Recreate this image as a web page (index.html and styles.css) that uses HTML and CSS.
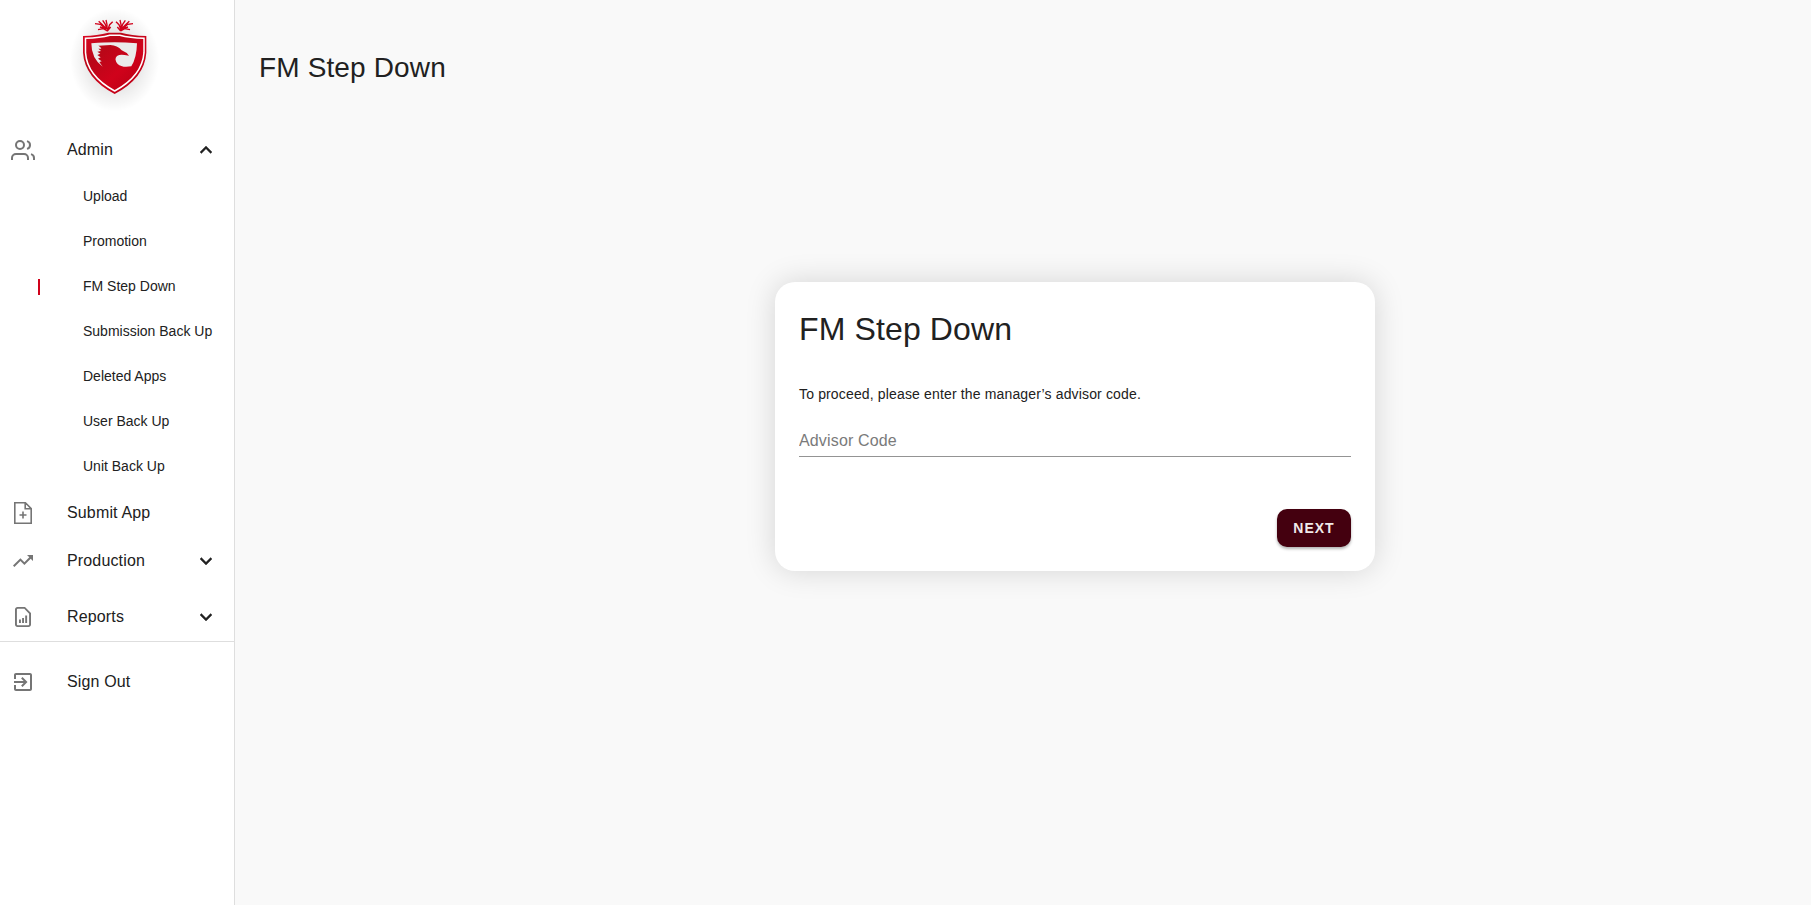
FILE: index.html
```html
<!DOCTYPE html>
<html lang="en">
<head>
<meta charset="utf-8">
<title>FM Step Down</title>
<link rel="stylesheet" href="styles.css">
</head>
<body>
<div class="app">
  <aside class="sidebar">
    <div class="brand">
      <svg class="logo" width="90" height="110" viewBox="0 0 270 330">
        <defs>
          <radialGradient id="halo"><stop offset=".4" stop-color="#000" stop-opacity=".13"/><stop offset=".75" stop-color="#000" stop-opacity=".05"/><stop offset="1" stop-color="#000" stop-opacity="0"/></radialGradient>
          <linearGradient id="red" x1="0" y1="0" x2="1" y2="1"><stop offset="0" stop-color="#df0824"/><stop offset=".3" stop-color="#b90718"/><stop offset=".6" stop-color="#d0021b"/><stop offset="1" stop-color="#b00012"/></linearGradient>
        </defs>
        <ellipse cx="134" cy="165" rx="134" ry="155" fill="url(#halo)"/>
        <g fill="none" stroke="#d0021b" stroke-width="4">
          <path d="M75 56l16 2 16 14M86 49l12 11 12 12M98 46l8 12 5 15M108 45l3 14v14M128 50l-9 9-7 18M84 74l16-3 12 7M90 66l20 7M122 66l-10 12"/>
          <path d="M189 56l-16 2-16 14M178 49l-12 11-12 12M166 46l-8 12-5 15M150 45l3 14v14M138 50l9 9 7 18M180 74l-16-3-12 7M174 66l-20 7M142 66l10 12"/>
        </g>
        <path d="M39 93q44-1 76-10h38q31 9 76 10v50q-5 76-95 124-90-48-95-124z" fill="url(#red)"/>
        <path d="M46.500 100q44-1 73-9h30q29 8 72.500 9v43q-5 70-88 115-83-45-87.500-115z" fill="none" stroke="#fff" stroke-width="4.500"/>
        <path d="M64 115q40-3 70-3 32 0 67 3-1 44-17 69-28 5-41-7-12-15-2-24 9-6 23-3l13 2q-7-10-22-16-13-15-34-16l-36 2q8 5 9 9h-9l8 7-11 2 9 6-9 4 10 7-8 4 11 8-7 2 10 14q-34-24-34-70z" fill="#ebebeb"/>
      </svg>
    </div>
    <nav class="nav">
      <a class="item item-first">
        <svg class="icon line" viewBox="0 0 24 24"><path d="M17 22v-2a4 4 0 0 0-4-4H5a4 4 0 0 0-4 4v2M23 22v-2a4 4 0 0 0-3-3.87M16 3.13a4 4 0 0 1 0 7.75"/><circle cx="9" cy="7" r="4"/></svg>
        <span class="label">Admin</span>
        <svg class="chevron" viewBox="0 0 24 24"><path d="M12 8l-6 6 1.41 1.41L12 10.83l4.59 4.58L18 14z"/></svg>
      </a>
      <div class="sub">
        <a class="subitem">Upload</a>
        <a class="subitem">Promotion</a>
        <a class="subitem active">FM Step Down</a>
        <a class="subitem">Submission Back Up</a>
        <a class="subitem">Deleted Apps</a>
        <a class="subitem">User Back Up</a>
        <a class="subitem">Unit Back Up</a>
      </div>
      <a class="item">
        <svg class="icon thin" viewBox="0 0 24 24"><path d="M3.800 1.800h10.600l5.800 5.800v14.600H3.800zM14.200 2v5.800h5.800M12 10.500v7M8.500 14h7"/></svg>
        <span class="label">Submit App</span>
      </a>
      <a class="item">
        <svg class="icon" viewBox="0 0 24 24"><path d="M16 6l2.290 2.290-4.880 4.880-4-4L2 16.590 3.410 18l6-6 4 4 6.300-6.290L22 12V6z"/></svg>
        <span class="label">Production</span>
        <svg class="chevron" viewBox="0 0 24 24"><path d="M16.590 8.590L12 13.170 7.410 8.590 6 10l6 6 6-6z"/></svg>
      </a>
      <a class="item item-reports">
        <svg class="icon" viewBox="0 0 24 24"><path d="M14 2H6.500C5.100 2 4 3.100 4 4.500v15C4 20.900 5.100 22 6.500 22h11c1.400 0 2.500-1.100 2.500-2.500V8zM18.100 19.400c0 .5-.3.800-.8.800H6.700c-.5 0-.8-.3-.8-.8V4.600c0-.5.3-.8.800-.8h6.600l4.800 4.900zM8 14.500h1.900V18H8zM11.100 13H13v5h-1.900zM14.200 10.500h1.900V18h-1.900z" fill-rule="evenodd"/></svg>
        <span class="label">Reports</span>
        <svg class="chevron" viewBox="0 0 24 24"><path d="M16.590 8.590L12 13.170 7.410 8.590 6 10l6 6 6-6z"/></svg>
      </a>
    </nav>
    <div class="footer-nav">
      <a class="item">
        <svg class="icon" viewBox="0 0 24 24"><path d="M10.090 15.590L11.500 17l5-5-5-5-1.410 1.410L12.670 11H3v2h9.670zM19 3H5c-1.110 0-2 .9-2 2v4h2V5h14v14H5v-4H3v4c0 1.100.89 2 2 2h14c1.100 0 2-.9 2-2V5c0-1.100-.9-2-2-2z"/></svg>
        <span class="label">Sign Out</span>
      </a>
    </div>
  </aside>
  <main class="main">
    <h1 class="page-title">FM Step Down</h1>
    <div class="stage">
      <section class="card">
        <h2 class="card-title">FM Step Down</h2>
        <p class="hint">To proceed, please enter the manager’s advisor code.</p>
        <input class="field" type="text" placeholder="Advisor Code">
        <button class="next" type="button">NEXT</button>
      </section>
    </div>
  </main>
</div>
</body>
</html>
```

FILE: styles.css
```css
* { box-sizing: border-box; }
body { margin: 0; background: #f9f9f9; color: #212121; font-family: "Liberation Sans", Arial, sans-serif; }
.app { display: flex; height: 905px; overflow: hidden; }
.sidebar { width: 235px; flex: none; background: #fff; border-right: 1px solid #dedede; }
.brand { height: 125px; padding: 5px 0 0 70px; }
.logo { display: block; }
.item { display: flex; align-items: center; height: 48px; padding: 0 16px 0 11px; }
.item-first { height: 49px; }
.item-reports { margin-top: 8px; }
.icon { width: 24px; height: 24px; flex: none; fill: #757575; }
.icon.line { fill: none; stroke: #757575; stroke-width: 2; }
.icon.thin { fill: none; stroke: #757575; stroke-width: 1.6; }
.label { flex: 1; margin-left: 32px; font-size: 16px; line-height: 24px; letter-spacing: .00938em; }
.chevron { width: 24px; height: 24px; fill: #212121; stroke: #212121; stroke-width: .4; }
.subitem { display: flex; align-items: center; height: 45px; margin-left: 38px; padding: 0 0 2px 45px; font-size: 14px; }
.subitem.active { background: linear-gradient(#d0021b, #d0021b) 0 15px / 2px 16px no-repeat; }
.footer-nav { border-top: 1px solid #dedede; padding-top: 16px; }
.main { flex: 1; display: flex; flex-direction: column; padding: 47px 24px 0; }
.page-title { margin: 0; height: 42px; font-size: 28px; line-height: 42px; font-weight: 400; letter-spacing: .005em; }
.stage { display: flex; justify-content: center; margin-top: 193px; padding-left: 104px; }
.card { width: 600px; height: 289px; padding: 24px; display: flex; flex-direction: column; background: #fff; border-radius: 20px; box-shadow: 0 0 30px rgba(0, 0, 0, .15); }
.card-title { margin: 0; font-size: 32px; line-height: 46px; font-weight: 400; letter-spacing: .004em; }
.hint { margin: 32px 0 0; font-size: 14px; line-height: 20px; letter-spacing: .01071em; }
.field { margin-top: 20px; height: 33px; padding: 2px 0 0; border: 0; border-bottom: 1px solid #949494; background: none; font: 16px "Liberation Sans", Arial, sans-serif; letter-spacing: .00938em; outline: 0; }
.field::placeholder { color: #7a7a7a; opacity: 1; }
.next { align-self: flex-end; width: 74px; height: 38px; margin-top: 52px; padding: 0; border: 0; border-radius: 10px; background: #44000f; color: #f0eaea; font: bold 14px "Liberation Sans", Arial, sans-serif; letter-spacing: 1px; box-shadow: 0 2px 3px rgba(0, 0, 0, .3); }
```
